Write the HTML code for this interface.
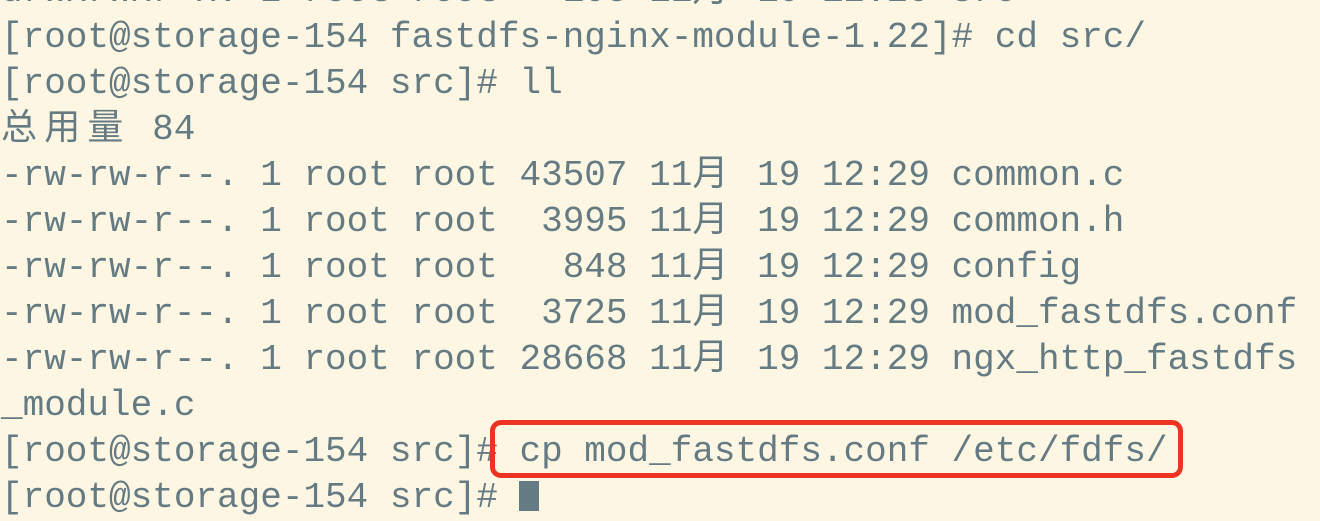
<!DOCTYPE html>
<html><head><meta charset="utf-8"><style>
html,body{margin:0;padding:0;width:1320px;height:494px;overflow:hidden;background:#fdf6e3;}
pre{position:absolute;left:1px;top:-31px;margin:0;font-family:"Liberation Mono","Noto Sans CJK SC",monospace;font-size:36px;line-height:46px;color:#657b83;white-space:pre;}
.c{display:inline-block;width:43.2px;}
.box{position:absolute;left:490px;top:420px;width:683px;height:48px;border:5px solid #ee3322;border-radius:11px;}
.cur{display:inline-block;width:20px;height:30px;background:#657b83;vertical-align:-4px;}
</style></head><body>
<pre>drwxrwxr-x. 2 root root   103 11<span class="c">月</span> 19 12:29 src
[root@storage-154 fastdfs-nginx-module-1.22]# cd src/
[root@storage-154 src]# ll
<span class="c">总</span><span class="c">用</span><span class="c">量</span> 84
-rw-rw-r--. 1 root root 43507 11<span class="c">月</span> 19 12:29 common.c
-rw-rw-r--. 1 root root  3995 11<span class="c">月</span> 19 12:29 common.h
-rw-rw-r--. 1 root root   848 11<span class="c">月</span> 19 12:29 config
-rw-rw-r--. 1 root root  3725 11<span class="c">月</span> 19 12:29 mod_fastdfs.conf
-rw-rw-r--. 1 root root 28668 11<span class="c">月</span> 19 12:29 ngx_http_fastdfs
_module.c
[root@storage-154 src]# cp mod_fastdfs.conf /etc/fdfs/
[root@storage-154 src]# <span class="cur"></span></pre>
<div class="box"></div>
</body></html>
